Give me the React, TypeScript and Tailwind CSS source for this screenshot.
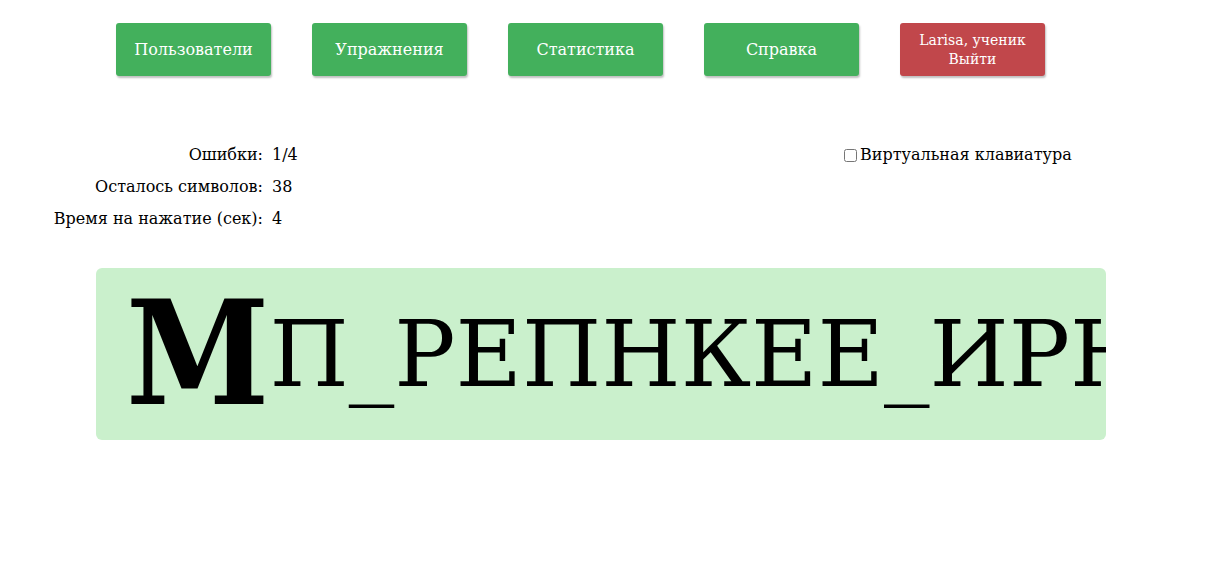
function NavButton({ label, red }: { label: React.ReactNode; red?: boolean }) {
  return (
    <button
      className={
        red
          ? "flex h-[53px] w-[145px] items-center justify-center rounded-[3px] bg-[#c1474b] text-[14px] leading-[19px] text-white shadow-[1px_2px_2px_rgba(0,0,0,0.25)]"
          : "flex h-[53px] w-[155px] items-center justify-center rounded-[3px] bg-[#43b05c] text-[16px] text-white shadow-[1px_2px_2px_rgba(0,0,0,0.25)]"
      }
    >
      {label}
    </button>
  )
}

function App() {
  return (
    <main className="h-[575px] w-full bg-white text-black" style={{ fontFamily: '"DejaVu Serif", serif' }}>
      <nav className="flex gap-[41px] pl-[116px] pt-[23px]">
        <NavButton label="Пользователи" />
        <NavButton label="Упражнения" />
        <NavButton label="Статистика" />
        <NavButton label="Справка" />
        <NavButton
          red
          label={
            <span className="text-center">
              Larisa, ученик
              <br />
              Выйти
            </span>
          }
        />
      </nav>

      <section className="mt-[68px] flex text-[16px]">
        <div className="grid grid-cols-[263px_80px] gap-x-[9px] gap-y-[10px] leading-[22px]">
          <span className="text-right">Ошибки:</span>
          <span>1/4</span>
          <span className="text-right">Осталось символов:</span>
          <span>38</span>
          <span className="text-right">Время на нажатие (сек):</span>
          <span>4</span>
        </div>
        <label className="ml-[492px] flex h-[22px] items-center">
          <input type="checkbox" className="m-0 h-[13px] w-[13px]" />
          <span className="ml-[3px]">Виртуальная клавиатура</span>
        </label>
      </section>

      <section className="ml-[96px] mt-[38px] flex h-[172px] w-[1010px] items-center overflow-hidden rounded-[6px] bg-[#caf0cc] pl-[30px] whitespace-nowrap">
        <span className="text-[144px] font-bold leading-none font-stretch-condensed">М</span>
        <span className="text-[91px] leading-none">П_РЕПНКЕЕ_ИРНА</span>
      </section>
    </main>
  )
}

export default App
